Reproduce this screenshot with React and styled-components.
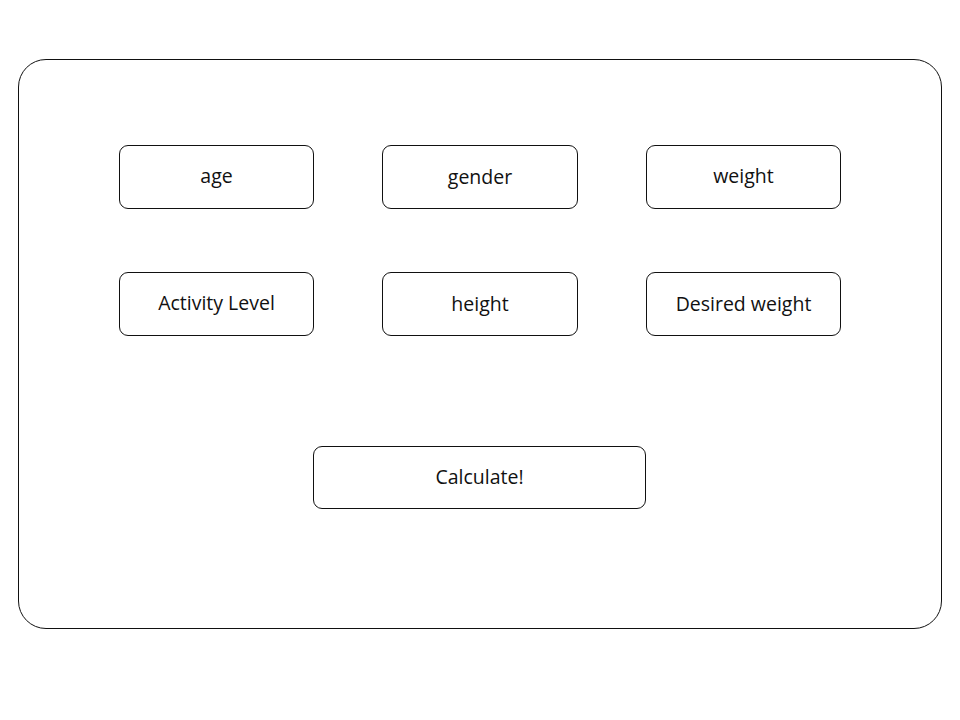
import React from 'react';
import styled, { createGlobalStyle } from 'styled-components';

const GlobalStyle = createGlobalStyle`
  body {
    margin: 0;
    background: #fff;
    font-family: "Open Sans", "Liberation Sans", sans-serif;
    color: #111;
  }
`;

const Page = styled.div`
  padding: 59px 18px 0 18px;
  width: 960px;
  box-sizing: border-box;
`;

const Card = styled.div`
  box-sizing: border-box;
  width: 924px;
  height: 570px;
  border: 1px solid #111;
  border-radius: 28px;
  padding-top: 85px;
  display: flex;
  flex-direction: column;
  align-items: center;
`;

const Fields = styled.div`
  display: grid;
  grid-template-columns: 195px 196px 195px;
  column-gap: 68px;
  row-gap: 63px;
`;

const Field = styled.div`
  box-sizing: border-box;
  height: 64px;
  border: 1px solid #111;
  border-radius: 9px;
  display: flex;
  align-items: center;
  justify-content: center;
  font-size: 19.5px;
  padding-bottom: ${(p) => (p.$raised ? '3px' : '1px')};
`;

const CalcButton = styled.div`
  box-sizing: border-box;
  margin-top: 110px;
  margin-right: 1px;
  width: 333px;
  height: 63px;
  border: 1px solid #111;
  border-radius: 9px;
  display: flex;
  align-items: center;
  justify-content: center;
  font-size: 19.5px;
  padding-bottom: 3px;
`;

const fields = [
  { label: 'age', raised: true },
  { label: 'gender' },
  { label: 'weight', raised: true },
  { label: 'Activity Level', raised: true },
  { label: 'height' },
  { label: 'Desired weight' },
];

const App = () => (
  <>
    <GlobalStyle />
    <Page>
      <Card>
        <Fields>
          {fields.map((f) => (
            <Field key={f.label} $raised={f.raised}>
              {f.label}
            </Field>
          ))}
        </Fields>
        <CalcButton>Calculate!</CalcButton>
      </Card>
    </Page>
  </>
);

export default App;
